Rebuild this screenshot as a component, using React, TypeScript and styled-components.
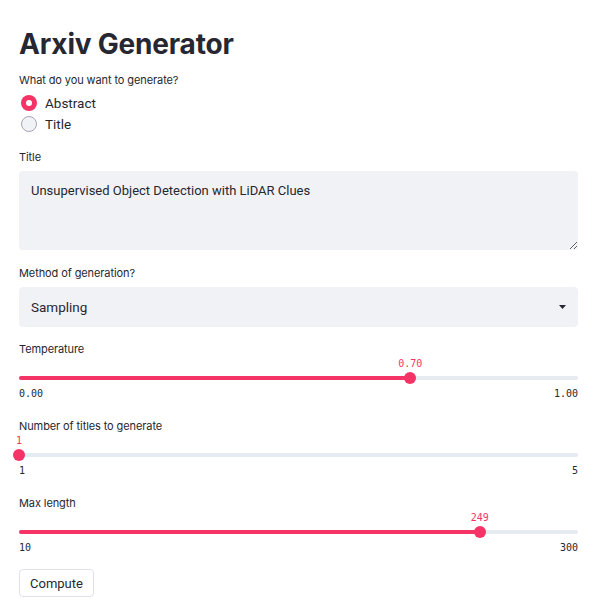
import React from "react";
import styled, { createGlobalStyle } from "styled-components";

const RED = "#f63366";
const TEXT = "#262730";
const SANS = `Roboto, Inter, "Noto Sans", sans-serif`;

const GlobalStyle = createGlobalStyle`
  body {
    margin: 0;
    background: #fff;
    color: ${TEXT};
    font-family: ${SANS};
  }
`;

const Main = styled.main`
  width: 559px;
  padding: 24px 25px 0 19px;
  display: flex;
  flex-direction: column;
`;

const Heading = styled.h1`
  margin: 0 0 8px;
  font-family: Inter, sans-serif;
  font-size: 28px;
  line-height: 40px;
  font-weight: 700;
  letter-spacing: -0.2px;
`;

const Label = styled.div`
  font-family: Inter, sans-serif;
  font-size: 11px;
  line-height: 16px;
  letter-spacing: -0.1px;
`;

const Field = styled.div<{ $gap?: number }>`
  display: flex;
  flex-direction: column;
  margin-bottom: ${(p) => p.$gap ?? 15}px;
`;

const RadioGroup = styled.div`
  display: flex;
  flex-direction: column;
  padding-top: 4px;
`;

const RadioRow = styled.label`
  display: flex;
  align-items: center;
  gap: 8px;
  height: 21px;
  font-size: 13.5px;
  padding-left: 2px;
`;

const RadioDot = styled.span<{ $checked?: boolean }>`
  box-sizing: border-box;
  width: 16px;
  height: 16px;
  border-radius: 50%;
  background: ${(p) => (p.$checked ? RED : "#f0f2f6")};
  border: ${(p) => (p.$checked ? "none" : "1.5px solid #a3a8b8")};
  display: flex;
  align-items: center;
  justify-content: center;

  &::after {
    content: "";
    display: ${(p) => (p.$checked ? "block" : "none")};
    width: 6px;
    height: 6px;
    border-radius: 50%;
    background: #fff;
  }
`;

const TextArea = styled.textarea`
  box-sizing: border-box;
  margin-top: 6px;
  width: 100%;
  height: 79px;
  border: none;
  border-radius: 4px;
  background: #f0f2f6;
  padding: 10px 12px;
  font-family: ${SANS};
  font-size: 13px;
  line-height: 20px;
  color: ${TEXT};
  outline: none;
`;

const Select = styled.div`
  box-sizing: border-box;
  margin-top: 6px;
  height: 40px;
  border-radius: 4px;
  background: #f0f2f6;
  padding: 0 12px;
  display: flex;
  align-items: center;
  justify-content: space-between;
  font-size: 13.5px;
`;

const SliderBox = styled.div`
  display: flex;
  flex-direction: column;
  margin-bottom: 17px;
`;

const ValueRow = styled.div`
  position: relative;
  height: 14px;
`;

const Mono = styled.span`
  font-family: "DejaVu Sans Mono", "Liberation Mono", monospace;
  font-size: 10px;
  line-height: 14px;
`;

const Value = styled(Mono)`
  position: absolute;
  top: 0;
  transform: translateX(-50%);
  color: ${RED};
`;

const Track = styled.div`
  position: relative;
  height: 14px;
  display: flex;
  align-items: center;

  &::before {
    content: "";
    width: 100%;
    height: 4px;
    border-radius: 2px;
    background: #e6eaf1;
  }
`;

const Fill = styled.div`
  position: absolute;
  left: 0;
  top: 5px;
  height: 4px;
  border-radius: 2px;
  background: ${RED};
`;

const Thumb = styled.div`
  position: absolute;
  top: 1px;
  width: 12px;
  height: 12px;
  border-radius: 50%;
  background: ${RED};
  transform: translateX(-50%);
`;

const Ticks = styled.div`
  margin-top: 2px;
  display: flex;
  justify-content: space-between;
`;

const Button = styled.button`
  align-self: flex-start;
  margin-top: -3px;
  height: 28px;
  padding: 0 10px;
  background: #fff;
  border: 1px solid #e0e2e8;
  border-radius: 4px;
  font-family: ${SANS};
  font-size: 13px;
  color: ${TEXT};
`;

type SliderProps = {
  label: string;
  value: string;
  min: string;
  max: string;
  frac: number;
};

const Slider = ({ label, value, min, max, frac }: SliderProps) => {
  const pos = `${frac * 100}%`;
  return (
    <SliderBox>
      <Label>{label}</Label>
      <ValueRow>
        <Value style={{ left: pos }}>{value}</Value>
      </ValueRow>
      <Track>
        <Fill style={{ width: pos }} />
        <Thumb style={{ left: pos }} />
      </Track>
      <Ticks>
        <Mono>{min}</Mono>
        <Mono>{max}</Mono>
      </Ticks>
    </SliderBox>
  );
};

const Caret = () => (
  <svg width="7" height="4" viewBox="0 0 7 4">
    <path d="M0 0 H7 L3.5 4 Z" fill={TEXT} />
  </svg>
);

export default function App() {
  return (
    <>
      <GlobalStyle />
      <Main>
        <Heading>Arxiv Generator</Heading>
        <Field $gap={15}>
          <Label>What do you want to generate?</Label>
          <RadioGroup>
            <RadioRow>
              <RadioDot $checked />
              Abstract
            </RadioRow>
            <RadioRow>
              <RadioDot />
              Title
            </RadioRow>
          </RadioGroup>
        </Field>
        <Field>
          <Label>Title</Label>
          <TextArea defaultValue="Unsupervised Object Detection with LiDAR Clues" />
        </Field>
        <Field $gap={14}>
          <Label>Method of generation?</Label>
          <Select>
            Sampling
            <Caret />
          </Select>
        </Field>
        <Slider label="Temperature" value="0.70" min="0.00" max="1.00" frac={0.7} />
        <Slider label="Number of titles to generate" value="1" min="1" max="5" frac={0} />
        <Slider label="Max length" value="249" min="10" max="300" frac={239 / 290} />
        <Button>Compute</Button>
      </Main>
    </>
  );
}
